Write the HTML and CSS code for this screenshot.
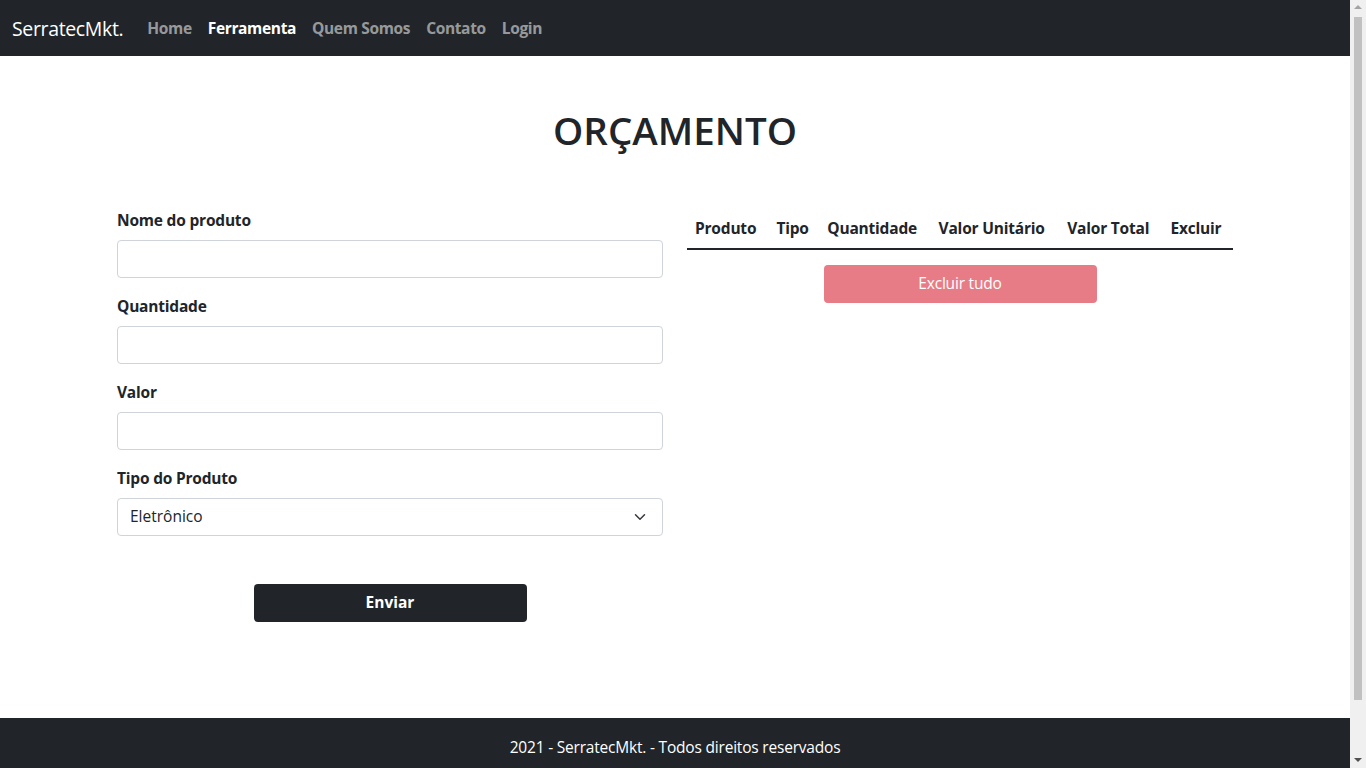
FILE: index.html
```html
<!DOCTYPE html>
<html lang="pt-BR">
<head>
<meta charset="utf-8">
<title>SerratecMkt. - Orçamento</title>
<link rel="stylesheet" href="styles.css">
</head>
<body>
<div class="page">
  <nav class="navbar">
    <a class="brand" href="#">SerratecMkt.</a>
    <ul class="nav">
      <li><a class="nav-link" href="#">Home</a></li>
      <li><a class="nav-link active" href="#">Ferramenta</a></li>
      <li><a class="nav-link" href="#">Quem Somos</a></li>
      <li><a class="nav-link" href="#">Contato</a></li>
      <li><a class="nav-link" href="#">Login</a></li>
    </ul>
  </nav>
  <main class="main">
    <h1 class="title">ORÇAMENTO</h1>
    <div class="container">
      <form class="col form-col">
        <div class="field">
          <label class="label">Nome do produto</label>
          <input class="control" type="text">
        </div>
        <div class="field">
          <label class="label">Quantidade</label>
          <input class="control" type="text">
        </div>
        <div class="field">
          <label class="label">Valor</label>
          <input class="control" type="text">
        </div>
        <div class="field">
          <label class="label">Tipo do Produto</label>
          <div class="select">
            <span>Eletrônico</span>
            <svg class="chev" width="16" height="12" viewBox="0 0 16 16"><path d="m2 5 6 6 6-6" fill="none" stroke="#343a40" stroke-linecap="round" stroke-linejoin="round" stroke-width="2"/></svg>
          </div>
        </div>
        <div class="btn-row">
          <button type="button" class="btn btn-dark">Enviar</button>
        </div>
      </form>
      <div class="col table-col">
        <table class="table">
          <thead>
            <tr>
              <th>Produto</th>
              <th>Tipo</th>
              <th>Quantidade</th>
              <th>Valor Unitário</th>
              <th>Valor Total</th>
              <th>Excluir</th>
            </tr>
          </thead>
        </table>
        <div class="btn-row">
          <button type="button" class="btn btn-danger" disabled>Excluir tudo</button>
        </div>
      </div>
    </div>
  </main>
  <footer class="footer">
    <p>2021 - SerratecMkt. - Todos direitos reservados</p>
  </footer>
</div>
<div class="scrollbar" aria-hidden="true">
  <svg class="arrow arrow-up" width="16" height="17" viewBox="0 0 16 17"><path d="M4 9 L8 5 L12 9 Z" fill="#a3a3a3"/></svg>
  <div class="thumb"></div>
  <svg class="arrow arrow-down" width="16" height="17" viewBox="0 0 16 17"><path d="M4 7 L8 11 L12 7 Z" fill="#505050"/></svg>
</div>
</body>
</html>
```
FILE: styles.css
```css
* { box-sizing: border-box; }
html, body { margin: 0; padding: 0; }
body {
  font-family: "Open Sans", "Noto Sans", sans-serif;
  font-size: 16px;
  line-height: 1.5;
  color: #212529;
  background: #fff;
}
a { text-decoration: none; }

.page {
  width: 1350px;
}

.navbar {
  display: flex;
  align-items: center;
  height: 56px;
  padding: 2px 12px 0;
  background: #212529;
}
.brand {
  color: #fff;
  font-size: 19.5px;
  line-height: 30px;
  margin-right: 16px;
  letter-spacing: -0.35px;
}
.nav {
  display: flex;
  list-style: none;
  margin: 0;
  padding: 0;
}
.nav-link {
  display: block;
  padding: 8px;
  color: rgba(255,255,255,.55);
  font-weight: 700;
  font-size: 15.5px;
  letter-spacing: -0.35px;
}
.nav-link.active { color: #fff; }

.main {
  padding-top: 44px;
  min-height: 662px;
}
.title {
  margin: 0 0 48px;
  text-align: center;
  font-size: 38.5px;
  font-weight: 600;
  line-height: 60px;
  letter-spacing: 0;
}
.container {
  width: 1140px;
  margin: 0 auto;
  display: flex;
}
.col {
  width: 50%;
  padding: 0 12px;
}
.field { margin-bottom: 16px; }
.label {
  display: block;
  font-weight: 700;
  font-size: 15.5px;
  line-height: 24px;
  letter-spacing: -0.2px;
  margin-bottom: 8px;
}
.control, .select {
  display: block;
  width: 100%;
  height: 38px;
  border: 1px solid #ced4da;
  border-radius: 4px;
  background: #fff;
  font: inherit;
}
.select {
  display: flex;
  align-items: center;
  justify-content: space-between;
  padding: 0 12px;
  font-size: 15.5px;
}
.chev { margin-right: 2px; }
.btn-row {
  display: flex;
  justify-content: center;
}
.form-col .btn-row { padding-top: 32px; }
.btn {
  width: 50%;
  height: 38px;
  border: 0;
  border-radius: 4px;
  font: inherit;
  font-size: 15.5px;
  color: #fff;
}
.btn-dark {
  background: #212529;
  font-weight: 700;
}
.btn-danger {
  background: #e77c86;
  letter-spacing: -0.2px;
}
.table {
  width: 100%;
  border-collapse: collapse;
  margin-bottom: 15px;
}
.table th {
  padding: 8px 8px;
  font-weight: 700;
  font-size: 15.5px;
  letter-spacing: -0.2px;
  text-align: left;
  white-space: nowrap;
  border-bottom: 2px solid #212529;
  line-height: 24px;
}
.footer {
  background: #212529;
  color: #fff;
  text-align: center;
  padding: 17px 0 68px;
}
.footer p {
  margin: 0;
  font-size: 15.5px;
  line-height: 24px;
  letter-spacing: -0.2px;
}

.scrollbar {
  position: fixed;
  top: 0;
  right: 0;
  width: 16px;
  height: 100vh;
  background: #f0f0f0;
  display: flex;
  flex-direction: column;
  align-items: center;
}
.arrow { flex: none; display: block; }
.thumb {
  width: 8px;
  height: 683px;
  background: #c1c1c1;
  flex: none;
}
.arrow-down { margin-top: auto; }
```
